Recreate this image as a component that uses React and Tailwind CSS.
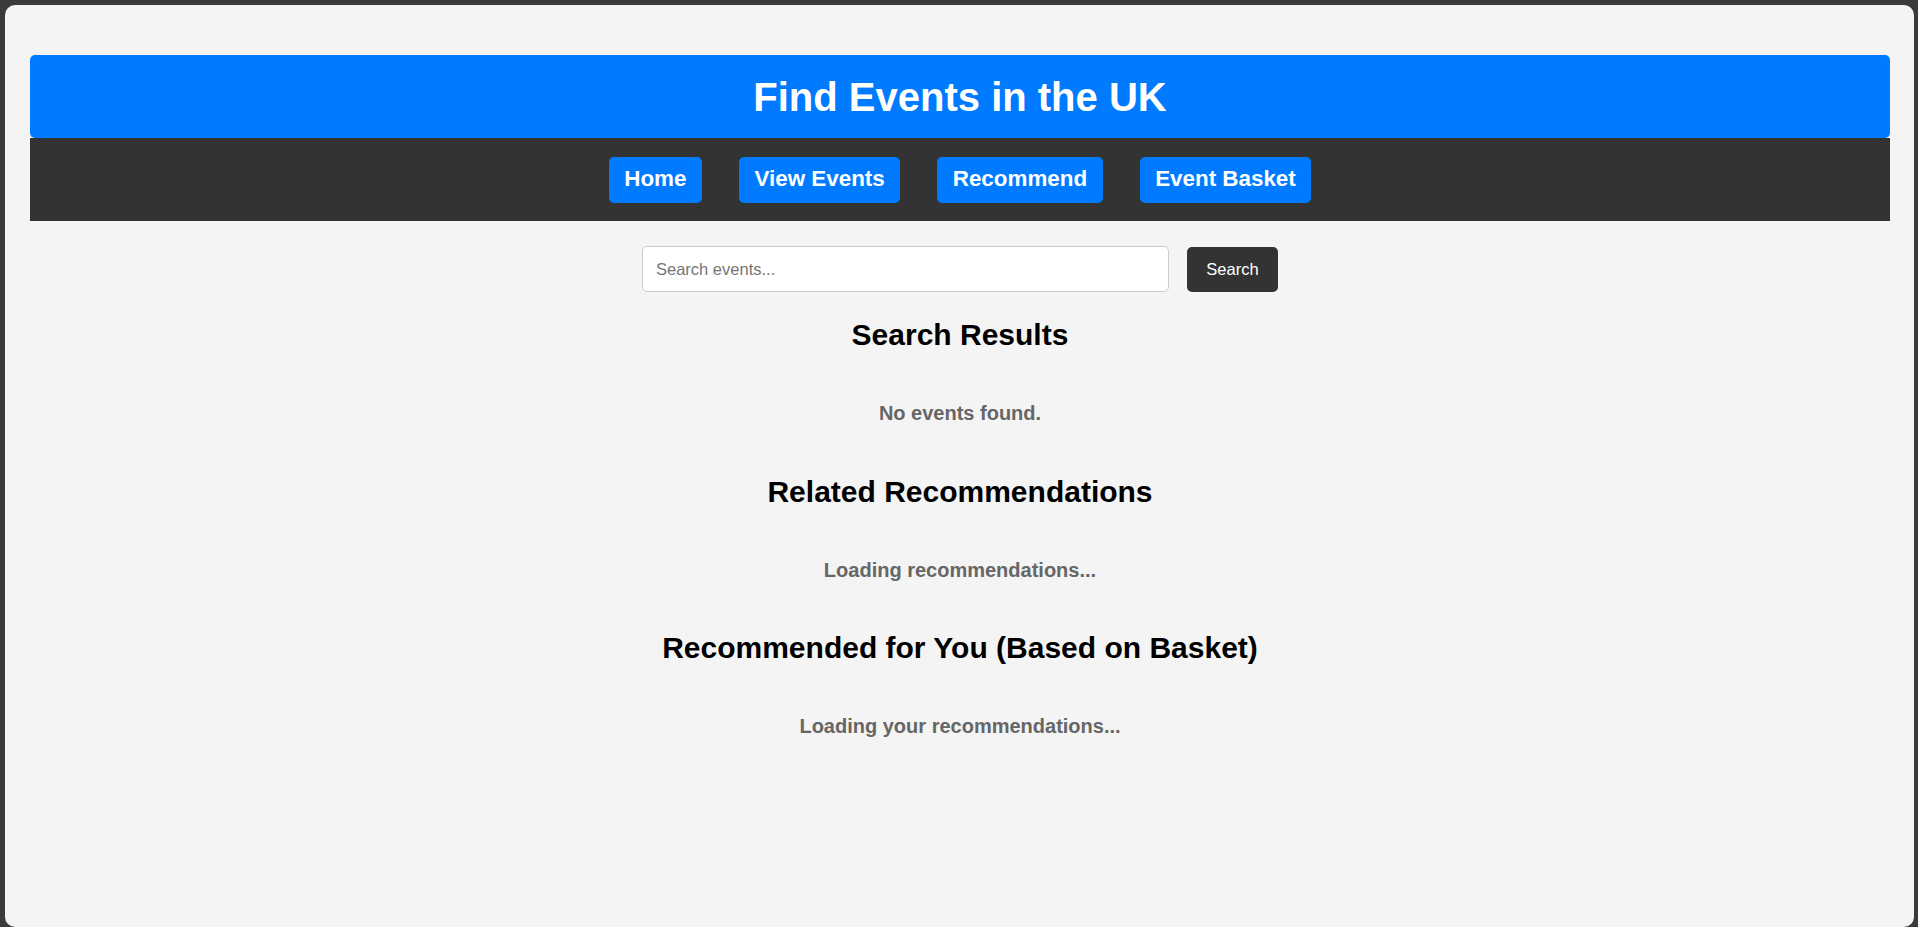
import React, { useState } from "react";

const navLinks = ["Home", "View Events", "Recommend", "Event Basket"];

export default function App() {
  const [query, setQuery] = useState("");

  return (
    <div className="min-h-screen bg-[#3a3a3a] pt-[5px] pl-[5px] pr-[4px] font-['Liberation_Sans',Arial,sans-serif]">
      <div className="h-[922px] bg-[#f4f4f4] rounded-[10px] pl-[25px] pr-[24px] pt-[50px]">
        <header className="h-[83px] bg-[#007bff] rounded-[5px] flex items-center justify-center">
          <h1 className="text-white text-[40px] font-bold leading-[46px]">Find Events in the UK</h1>
        </header>

        <nav className="h-[83px] bg-[#333] flex items-center justify-center gap-[37px]">
          {navLinks.map((link) => (
            <a
              key={link}
              href="#"
              className="bg-[#007bff] text-white text-[22.4px] font-bold leading-[24px] px-[15.5px] pt-[10px] pb-[12px] rounded-[5px]"
            >
              {link}
            </a>
          ))}
        </nav>

        <div className="flex flex-col items-center">
          <div className="mt-[25px] flex items-center gap-[18px]">
            <input
              type="text"
              value={query}
              onChange={(e) => setQuery(e.target.value)}
              placeholder="Search events..."
              className="w-[527px] h-[46px] bg-white border border-[#ccc] rounded-[5px] px-[13px] text-[16.5px] text-[#333] placeholder:text-[#757575] outline-none"
            />
            <button className="h-[45px] w-[91px] bg-[#333] text-white text-[16.5px] rounded-[5px]">
              Search
            </button>
          </div>

          <h2 className="mt-[26px] text-[30px] font-bold leading-[34px] text-black">Search Results</h2>
          <p className="mt-[50px] text-[20px] font-bold leading-[23px] text-[#666]">No events found.</p>

          <h2 className="mt-[50px] text-[30px] font-bold leading-[34px] text-black">Related Recommendations</h2>
          <p className="mt-[50px] text-[20px] font-bold leading-[23px] text-[#666]">Loading recommendations...</p>

          <h2 className="mt-[49px] text-[30px] font-bold leading-[34px] text-black">
            Recommended for You (Based on Basket)
          </h2>
          <p className="mt-[50px] text-[20px] font-bold leading-[23px] text-[#666]">Loading your recommendations...</p>
        </div>
      </div>
    </div>
  );
}
